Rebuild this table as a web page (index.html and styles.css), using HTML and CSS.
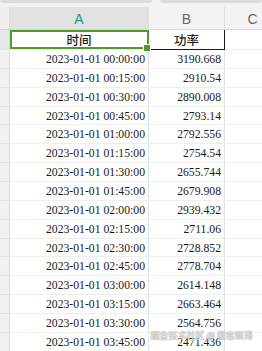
FILE: index.html
```html
<!DOCTYPE html>
<html>
<head>
<meta charset="utf-8">
<link rel="stylesheet" href="styles.css">
</head>
<body>
<div class="page">
  <div class="topbar"><div class="seg seg-left"></div><div class="seg seg-right"></div></div>
  <div class="sheet">
    <div class="corner"></div>
    <div class="colhead sel">A</div>
    <div class="colhead">B</div>
    <div class="colhead">C</div>

    <div class="rowhead rh-sel"></div>
    <div class="cell title active">时间</div>
    <div class="cell title boxed">功率</div>
    <div class="cell"></div>

    <div class="rowhead"></div><div class="cell date">2023-01-01 00:00:00</div><div class="cell num">3190.668</div><div class="cell"></div>
    <div class="rowhead"></div><div class="cell date">2023-01-01 00:15:00</div><div class="cell num">2910.54</div><div class="cell"></div>
    <div class="rowhead"></div><div class="cell date">2023-01-01 00:30:00</div><div class="cell num">2890.008</div><div class="cell"></div>
    <div class="rowhead"></div><div class="cell date">2023-01-01 00:45:00</div><div class="cell num">2793.14</div><div class="cell"></div>
    <div class="rowhead"></div><div class="cell date">2023-01-01 01:00:00</div><div class="cell num">2792.556</div><div class="cell"></div>
    <div class="rowhead"></div><div class="cell date">2023-01-01 01:15:00</div><div class="cell num">2754.54</div><div class="cell"></div>
    <div class="rowhead"></div><div class="cell date">2023-01-01 01:30:00</div><div class="cell num">2655.744</div><div class="cell"></div>
    <div class="rowhead"></div><div class="cell date">2023-01-01 01:45:00</div><div class="cell num">2679.908</div><div class="cell"></div>
    <div class="rowhead"></div><div class="cell date">2023-01-01 02:00:00</div><div class="cell num">2939.432</div><div class="cell"></div>
    <div class="rowhead"></div><div class="cell date">2023-01-01 02:15:00</div><div class="cell num">2711.06</div><div class="cell"></div>
    <div class="rowhead"></div><div class="cell date">2023-01-01 02:30:00</div><div class="cell num">2728.852</div><div class="cell"></div>
    <div class="rowhead"></div><div class="cell date">2023-01-01 02:45:00</div><div class="cell num">2778.704</div><div class="cell"></div>
    <div class="rowhead"></div><div class="cell date">2023-01-01 03:00:00</div><div class="cell num">2614.148</div><div class="cell"></div>
    <div class="rowhead"></div><div class="cell date">2023-01-01 03:15:00</div><div class="cell num">2663.464</div><div class="cell"></div>
    <div class="rowhead"></div><div class="cell date">2023-01-01 03:30:00</div><div class="cell num">2564.756</div><div class="cell"></div>
    <div class="rowhead"></div><div class="cell date">2023-01-01 03:45:00</div><div class="cell num">2471.436</div><div class="cell"></div>
  </div>
  <div class="watermark">掘金技术社区 @ 极客飒哥</div>
</div>
</body>
</html>
```

FILE: styles.css
```css
* { box-sizing: border-box; }
html, body { margin: 0; padding: 0; background: #ffffff; }
.page {
  position: relative;
  width: 262px;
  height: 351px;
  overflow: hidden;
  background: #ffffff;
}
.topbar {
  height: 7px;
  background: #f3f3f3;
  display: flex;
  gap: 8px;
}
.seg {
  height: 3px;
  background: #dcdcdc;
  border-radius: 0 0 3px 3px;
}
.seg-left { width: 152px; }
.seg-right { flex: 1; }
.sheet {
  display: grid;
  grid-template-columns: 10px 139px 76px 56px;
  grid-template-rows: 23px 20px;
  grid-auto-rows: 18.87px;
  width: 281px;
}
.corner {
  background: #efefef;
  border-right: 1px solid #dcdcdc;
  border-bottom: 1px solid #d6d6d6;
}
.colhead {
  background: #f3f3f3;
  border-right: 1px solid #dedede;
  border-bottom: 1px solid #d6d6d6;
  color: #666666;
  font-family: "Liberation Sans", Arial, sans-serif;
  font-size: 14px;
  display: flex;
  align-items: center;
  justify-content: center;
  padding-top: 2px;
}
.colhead.sel {
  background: #e1e1e1;
  color: #26917a;
}
.rowhead {
  background: #f1f1f1;
  border-right: 1px solid #dcdcdc;
  border-bottom: 1px solid #e2e2e2;
}
.rowhead.rh-sel { background: #e6e6e6; }
.cell {
  border-right: 1px solid #e2e2e2;
  border-bottom: 1px solid #eeeeee;
  white-space: nowrap;
  overflow: visible;
  display: flex;
  align-items: center;
  color: #1a1a1a;
}
.title {
  justify-content: center;
  font-family: "Noto Sans CJK SC", sans-serif;
  font-size: 12.5px;
  font-weight: 500;
}
.active { position: relative; }
.active::after {
  content: "";
  position: absolute;
  left: 0;
  top: 0;
  right: -1px;
  bottom: 0;
  border: 2px solid #4f9a2a;
}
.active::before {
  content: "";
  position: absolute;
  right: -3px;
  bottom: -3px;
  width: 6px;
  height: 6px;
  background: #4f9a2a;
  border: 1px solid #ffffff;
  z-index: 2;
}
.boxed {
  border-right: 1px solid #1a1a1a;
  border-bottom: 1px solid #1a1a1a;
}
.date, .num {
  justify-content: flex-end;
  padding-right: 3px;
  font-family: "Liberation Serif", "Times New Roman", serif;
  font-size: 11.7px;
  padding-top: 1px;
}
.watermark {
  position: absolute;
  right: 9px;
  bottom: 9px;
  font-family: "Noto Sans CJK SC", sans-serif;
  font-size: 9px;
  color: rgba(255, 255, 255, 0.85);
  text-shadow: 0 0 1px #8a8a8a, 0 0 1px #8a8a8a;
  white-space: nowrap;
}
```
